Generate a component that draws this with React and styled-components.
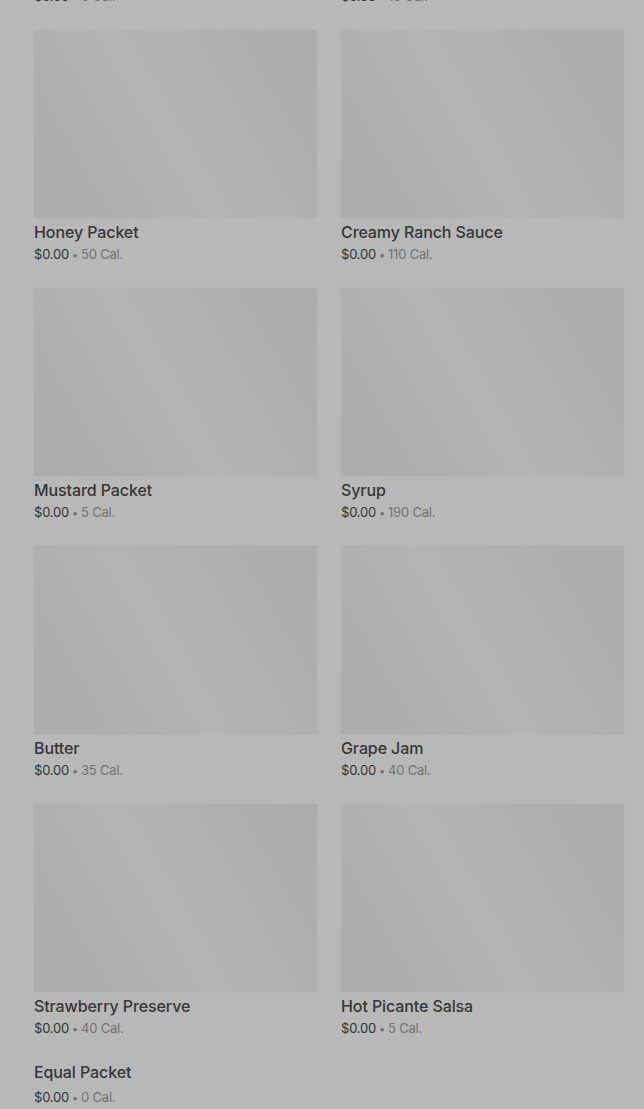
import React from "react";
import styled, { createGlobalStyle } from "styled-components";

const items = [
  { name: "Honey Packet", cal: 50 },
  { name: "Creamy Ranch Sauce", cal: 110 },
  { name: "Mustard Packet", cal: 5 },
  { name: "Syrup", cal: 190 },
  { name: "Butter", cal: 35 },
  { name: "Grape Jam", cal: 40 },
  { name: "Strawberry Preserve", cal: 40 },
  { name: "Hot Picante Salsa", cal: 5 },
  { name: "Equal Packet", cal: 0, noImage: true },
];

// the row above, scrolled almost out of view
const prevRow = [{ cal: 0 }, { cal: 10 }];

const GlobalStyle = createGlobalStyle`
  html, body {
    margin: 0;
    padding: 0;
    background: #b8b8b8;
    font-family: Inter, "Noto Sans", Arial, sans-serif;
    overflow: hidden;
  }
`;

const Page = styled.div`
  height: 1109px;
  overflow: hidden;
  padding: 0 20px 0 34px;
  background: #b8b8b8;
`;

const Grid = styled.div`
  display: grid;
  grid-template-columns: 283px 283px;
  column-gap: 24px;
  row-gap: 24px;
  margin-top: -14px;
`;

const Item = styled.div`
  display: flex;
  flex-direction: column;
`;

const Thumb = styled.div`
  height: 188px;
  margin-bottom: 4px;
  border-radius: 1px;
  background: linear-gradient(
    60deg,
    #acacac 0%,
    #aeaeae 20%,
    #b3b3b3 45%,
    #b2b2b2 60%,
    #aeaeae 80%,
    #acacac 100%
  );
  box-shadow: 0 0 0 1px #b4b4b4;
`;

const Title = styled.div`
  font-size: 16px;
  line-height: 20px;
  height: 20px;
  font-weight: 500;
  color: #363636;
  letter-spacing: -0.1px;
`;

const Meta = styled.div`
  margin-top: ${(p) => (p.$loose ? "5px" : "2px")};
  height: 20px;
  font-size: 13px;
  line-height: 20px;
  color: #727272;
  letter-spacing: -0.2px;
`;

const Price = styled.span`
  color: #333;
`;

const Dot = styled.span`
  margin: 0 3px;
  font-size: 11px;
  line-height: 1;
`;

const Ghost = styled(Meta)`
  margin-top: 0;
`;

export default function App() {
  return (
    <Page>
      <GlobalStyle />
      <Grid>
        {prevRow.map((r, i) => (
          <Ghost key={i}>
            <Price>$0.00</Price>
            <Dot>•</Dot>
            {r.cal} Cal.
          </Ghost>
        ))}
        {items.map((it) => (
          <Item key={it.name}>
            {!it.noImage && <Thumb />}
            <Title>{it.name}</Title>
            <Meta $loose={it.noImage}>
              <Price>$0.00</Price>
              <Dot>•</Dot>
              {it.cal} Cal.
            </Meta>
          </Item>
        ))}
      </Grid>
    </Page>
  );
}
